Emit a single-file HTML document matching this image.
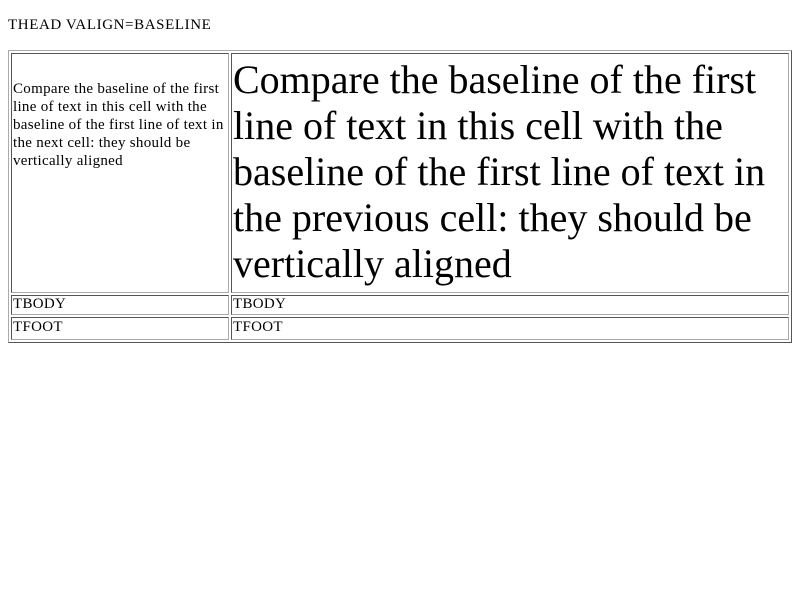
<!DOCTYPE html>
<html><head><style>
body{margin:0;font-family:"Liberation Serif",serif;color:#000;background:#fff}
.t{position:absolute;left:8px;top:17px;font-size:15px;line-height:17px;letter-spacing:0.6px}
table{position:absolute;left:8px;top:50px;width:784px;border-collapse:separate;border-spacing:2px;border:1px solid;border-color:#aaa #555 #555 #aaa;table-layout:fixed}
td{border:1px solid;border-color:#555 #aaa #aaa #555;padding:1px;vertical-align:baseline;font-size:15px;line-height:18px;letter-spacing:0.3px}
.big{font-size:40px;line-height:46px;letter-spacing:0;padding-top:3px}
.r2 td{height:18px;line-height:17px;vertical-align:top;padding:0 1px}
.r3 td{height:20px;line-height:17px;vertical-align:top;padding:1px 1px 0}
</style></head><body>
<div class="t">THEAD VALIGN=BASELINE</div>
<table>
<colgroup><col style="width:218px"><col></colgroup>
<tr style="height:240px"><td style="padding-top:6px">Compare the baseline of the first line of text in this cell with the baseline of the first line of text in the next cell: they should be vertically aligned</td>
<td class="big">Compare the baseline of the first line of text in this cell with the baseline of the first line of text in the previous cell: they should be vertically aligned</td></tr>
<tr class="r2"><td>TBODY</td><td>TBODY</td></tr>
<tr class="r3"><td>TFOOT</td><td>TFOOT</td></tr>
</table>
</body></html>
